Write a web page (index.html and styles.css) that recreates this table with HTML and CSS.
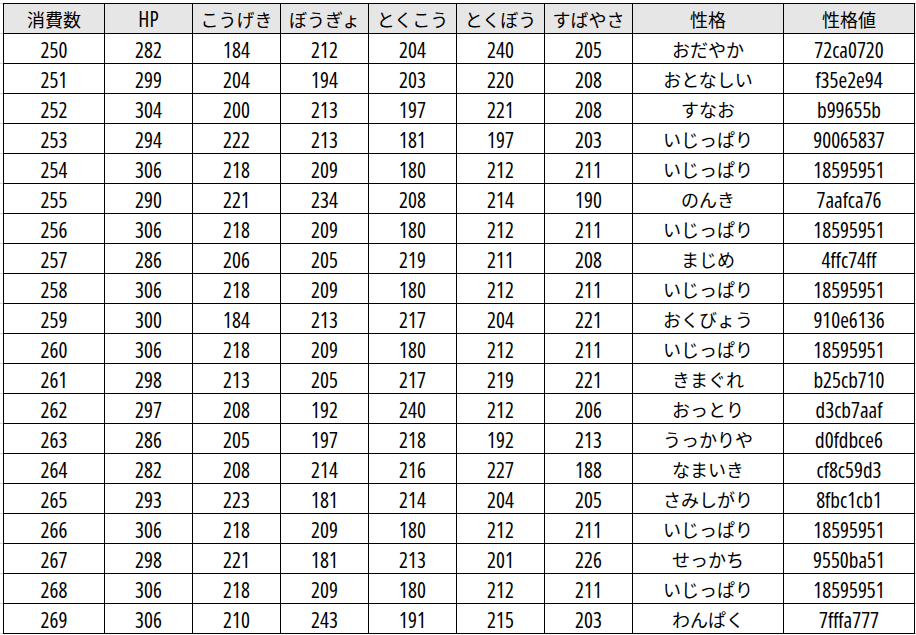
FILE: index.html
```html
<!DOCTYPE html>
<html lang="ja">
<head>
<meta charset="utf-8">
<title>個体値表</title>
<link rel="stylesheet" href="styles.css">
</head>
<body>
<table class="sheet">
  <colgroup>
    <col class="c-cost"><col class="c-stat"><col class="c-stat"><col class="c-stat"><col class="c-stat"><col class="c-stat"><col class="c-stat"><col class="c-nature"><col class="c-pid">
  </colgroup>
  <thead>
    <tr><th>消費数</th><th class="num">HP</th><th>こうげき</th><th>ぼうぎょ</th><th>とくこう</th><th>とくぼう</th><th>すばやさ</th><th>性格</th><th>性格値</th></tr>
  </thead>
  <tbody>
    <tr><td>250</td><td>282</td><td>184</td><td>212</td><td>204</td><td>240</td><td>205</td><td class="jp">おだやか</td><td>72ca0720</td></tr>
    <tr><td>251</td><td>299</td><td>204</td><td>194</td><td>203</td><td>220</td><td>208</td><td class="jp">おとなしい</td><td>f35e2e94</td></tr>
    <tr><td>252</td><td>304</td><td>200</td><td>213</td><td>197</td><td>221</td><td>208</td><td class="jp">すなお</td><td>b99655b</td></tr>
    <tr><td>253</td><td>294</td><td>222</td><td>213</td><td>181</td><td>197</td><td>203</td><td class="jp">いじっぱり</td><td>90065837</td></tr>
    <tr><td>254</td><td>306</td><td>218</td><td>209</td><td>180</td><td>212</td><td>211</td><td class="jp">いじっぱり</td><td>18595951</td></tr>
    <tr><td>255</td><td>290</td><td>221</td><td>234</td><td>208</td><td>214</td><td>190</td><td class="jp">のんき</td><td>7aafca76</td></tr>
    <tr><td>256</td><td>306</td><td>218</td><td>209</td><td>180</td><td>212</td><td>211</td><td class="jp">いじっぱり</td><td>18595951</td></tr>
    <tr><td>257</td><td>286</td><td>206</td><td>205</td><td>219</td><td>211</td><td>208</td><td class="jp">まじめ</td><td>4ffc74ff</td></tr>
    <tr><td>258</td><td>306</td><td>218</td><td>209</td><td>180</td><td>212</td><td>211</td><td class="jp">いじっぱり</td><td>18595951</td></tr>
    <tr><td>259</td><td>300</td><td>184</td><td>213</td><td>217</td><td>204</td><td>221</td><td class="jp">おくびょう</td><td>910e6136</td></tr>
    <tr><td>260</td><td>306</td><td>218</td><td>209</td><td>180</td><td>212</td><td>211</td><td class="jp">いじっぱり</td><td>18595951</td></tr>
    <tr><td>261</td><td>298</td><td>213</td><td>205</td><td>217</td><td>219</td><td>221</td><td class="jp">きまぐれ</td><td>b25cb710</td></tr>
    <tr><td>262</td><td>297</td><td>208</td><td>192</td><td>240</td><td>212</td><td>206</td><td class="jp">おっとり</td><td>d3cb7aaf</td></tr>
    <tr><td>263</td><td>286</td><td>205</td><td>197</td><td>218</td><td>192</td><td>213</td><td class="jp">うっかりや</td><td>d0fdbce6</td></tr>
    <tr><td>264</td><td>282</td><td>208</td><td>214</td><td>216</td><td>227</td><td>188</td><td class="jp">なまいき</td><td>cf8c59d3</td></tr>
    <tr><td>265</td><td>293</td><td>223</td><td>181</td><td>214</td><td>204</td><td>205</td><td class="jp">さみしがり</td><td>8fbc1cb1</td></tr>
    <tr><td>266</td><td>306</td><td>218</td><td>209</td><td>180</td><td>212</td><td>211</td><td class="jp">いじっぱり</td><td>18595951</td></tr>
    <tr><td>267</td><td>298</td><td>221</td><td>181</td><td>213</td><td>201</td><td>226</td><td class="jp">せっかち</td><td>9550ba51</td></tr>
    <tr><td>268</td><td>306</td><td>218</td><td>209</td><td>180</td><td>212</td><td>211</td><td class="jp">いじっぱり</td><td>18595951</td></tr>
    <tr><td>269</td><td>306</td><td>210</td><td>243</td><td>191</td><td>215</td><td>203</td><td class="jp">わんぱく</td><td>7fffa777</td></tr>
  </tbody>
</table>
</body>
</html>
```
FILE: styles.css
```css
html {
  background: #ffffff;
}
body {
  margin: 0;
  padding: 3px 0 0 3px;
  min-height: 635px;
  box-sizing: border-box;
  background-color: #ffffff;
  background-image:
    repeating-linear-gradient(to bottom, #d4d4d4 0 1px, transparent 1px 30px);
  background-position: 0 3px;
  background-repeat: no-repeat;
  background-size: 916px 640px;
}
.sheet {
  border-collapse: collapse;
  table-layout: fixed;
  width: 911px;
  background: #ffffff;
  color: #000000;
  font-family: "Open Sans", "Noto Sans CJK JP", sans-serif;
  font-stretch: 75%;
  font-weight: 400;
  font-size: 21px;
}
.c-cost { width: 101px; }
.c-stat { width: 88px; }
.c-nature { width: 151px; }
.c-pid { width: 131px; }
.sheet tr {
  height: 30px;
}
.sheet th,
.sheet td {
  border: 1px solid #000000;
  padding: 0;
  text-align: center;
  vertical-align: middle;
  white-space: nowrap;
  overflow: hidden;
  line-height: 28px;
}
.sheet td {
  padding-top: 2px;
  line-height: 26px;
}
.sheet th {
  background: #e7e6e6;
  font-weight: normal;
  font-family: "Noto Sans CJK JP", sans-serif;
  font-size: 18px;
}
.sheet th.num {
  font-family: "Open Sans", "Noto Sans CJK JP", sans-serif;
  font-size: 21px;
}
.sheet td.jp {
  font-family: "Noto Sans CJK JP", sans-serif;
  font-size: 18px;
  padding-top: 0;
  line-height: 28px;
}
```
